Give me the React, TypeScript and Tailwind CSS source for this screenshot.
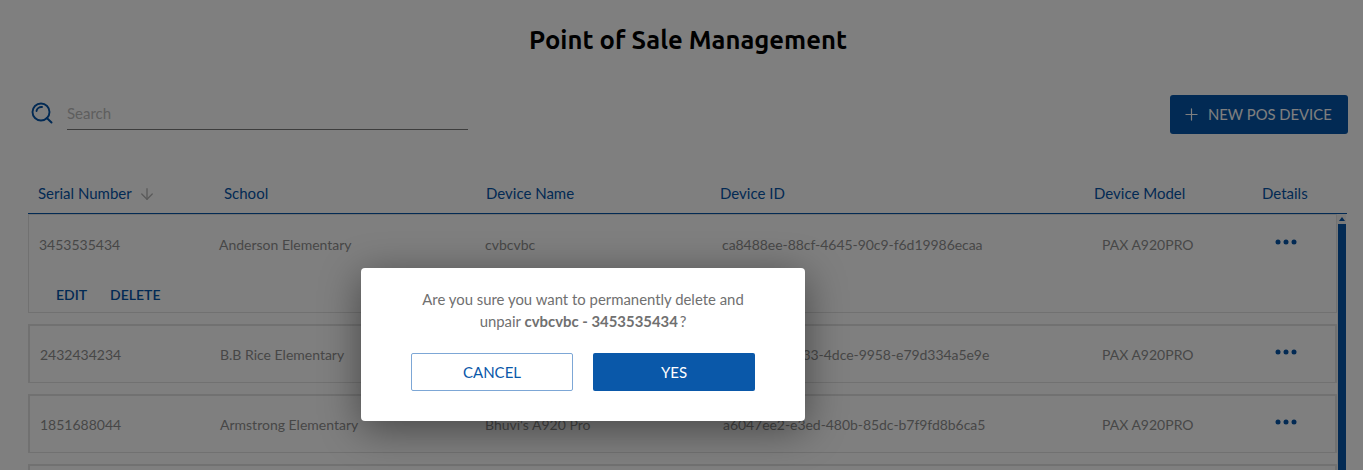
import { Plus, ArrowDown } from 'lucide-react'

interface Device {
  serial: string
  school: string
  name: string
  id: string
  model: string
}

const devices: Device[] = [
  { serial: '2432434234', school: 'B.B Rice Elementary', name: 'Test A920', id: 'b1f0c7a1-1d33-4dce-9958-e79d334a5e9e', model: 'PAX A920PRO' },
  { serial: '1851688044', school: 'Armstrong Elementary', name: "Bhuvi's A920 Pro", id: 'a6047ee2-e3ed-480b-85dc-b7f9fd8b6ca5', model: 'PAX A920PRO' },
]

function Dots() {
  return (
    <svg width="22" height="6" viewBox="0 0 22 6" fill="#0554a8">
      <circle cx="3" cy="3" r="2.5" />
      <circle cx="11" cy="3" r="2.5" />
      <circle cx="19" cy="3" r="2.5" />
    </svg>
  )
}

export default function App() {
  return (
    <div className="relative h-[470px] overflow-hidden bg-white font-['Lato','Noto_Sans',sans-serif] text-[14px] text-[#8f8f8f]">
      <h1 className="pt-[24px] pl-[13px] text-center font-['Ubuntu','Noto_Sans',sans-serif] text-[25.6px] leading-[32px] font-semibold text-black">
        Point of Sale Management
      </h1>

      {/* Search and new device */}
      <div className="mt-[39px] flex items-start justify-between pr-[15px] pl-[31px]">
        <div className="flex items-start gap-[14px] pt-[5px]">
          <svg width="22" height="22" viewBox="0 0 22 22" fill="none" stroke="#0554a8" strokeWidth="1.9" strokeLinecap="round" className="mt-[2px]">
            <circle cx="10" cy="10" r="8.5" />
            <path d="M15.8 16 L20.5 20.5" strokeWidth="2" />
            <path d="M5.5 9 A5 5 0 0 1 11 5" />
          </svg>
          <div className="h-[30px] w-[401px] border-b border-[#7a7a7a] pt-[3px] text-[15px] leading-[20px] text-[#bdbdbd]">Search</div>
        </div>
        <button className="flex h-[39px] w-[178px] items-center gap-[7px] rounded-[3px] bg-[#0554a8] pl-[12px] text-[14.8px] text-white">
          <Plus size={19} strokeWidth={1.5} />
          NEW POS DEVICE
        </button>
      </div>

      {/* Table header */}
      <div className="mt-[42px] mr-[16px] ml-[28px] flex h-[38px] items-center border-b border-[#0554a8] pb-[2px] text-[15px] text-[#0554a8]">
        <div className="flex w-[196px] items-center gap-[6px] pl-[10px]">
          Serial Number
          <ArrowDown size={18} strokeWidth={1.8} className="text-[#b5b5b5]" />
        </div>
        <div className="w-[262px]">School</div>
        <div className="w-[234px]">Device Name</div>
        <div className="w-[374px]">Device ID</div>
        <div className="w-[168px]">Device Model</div>
        <div>Details</div>
      </div>

      <div className="relative mr-[26px] ml-[28px]">
        {/* Expanded row */}
        <div className="h-[99px] border border-[#e3e3e3]">
          <div className="flex h-[60px] items-center pb-[2px] text-[14px]">
            <div className="w-[190px] pl-[10px]">3453535434</div>
            <div className="w-[266px]">Anderson Elementary</div>
            <div className="w-[237px]">cvbcvbc</div>
            <div className="w-[380px] tracking-[-0.05px]">ca8488ee-88cf-4645-90c9-f6d19986ecaa</div>
            <div className="w-[173px]">PAX A920PRO</div>
            <div className="-mt-[5px]"><Dots /></div>
          </div>
          <div className="mt-[10px] flex gap-[23px] pl-[27px] text-[14px] leading-[20px] font-semibold text-[#0554a8]">
            <span>EDIT</span>
            <span>DELETE</span>
          </div>
        </div>

        {devices.map((d) => (
          <div key={d.serial} className="mt-[11px] flex h-[59px] items-center border-2 border-b border-[#e3e3e3] text-[14px]">
            <div className="w-[190px] pl-[10px]">{d.serial}</div>
            <div className="w-[265px]">{d.school}</div>
            <div className="w-[238px]">{d.name}</div>
            <div className="w-[379px] tracking-[-0.05px]">{d.id}</div>
            <div className="w-[173px]">{d.model}</div>
            <div className="-mt-[5px]"><Dots /></div>
          </div>
        ))}

        {/* Next row, only its top edge is on screen */}
        <div className="mt-[11px] h-[59px] border-2 border-b border-[#e3e3e3]" />

        {/* Scrollbar */}
        <div className="absolute top-0 right-[-9px] flex h-[300px] w-[9px] flex-col bg-[#f2f2f2] pl-[1px]">
          <div className="flex h-[10px] items-center justify-center">
            <div className="h-0 w-0 border-x-[3px] border-b-[4px] border-x-transparent border-b-[#0554a8]" />
          </div>
          <div className="flex-1 bg-[#0554a8]" />
        </div>
      </div>

      {/* Confirm dialog */}
      <div className="absolute inset-0 bg-black/50 pt-[268px] pl-[361px]">
        <div className="h-[153px] w-[444px] rounded-[4px] bg-white pt-[20px] shadow-[0_8px_40px_rgba(0,0,0,0.45)]">
          <p className="text-center text-[14.9px] leading-[22px] text-[#707070]">
            Are you sure you want to permanently delete and
            <br />
            unpair <b className="font-bold">cvbcvbc - 3453535434</b>&thinsp;?
          </p>
          <div className="mt-[21px] flex gap-[20px] pl-[50px]">
            <button className="h-[38px] w-[162px] rounded-[2px] border border-[#7da7d6] text-[15px] text-[#0a58a9]">CANCEL</button>
            <button className="h-[38px] w-[162px] rounded-[2px] bg-[#0a58a9] text-[15px] text-white">YES</button>
          </div>
        </div>
      </div>
    </div>
  )
}
